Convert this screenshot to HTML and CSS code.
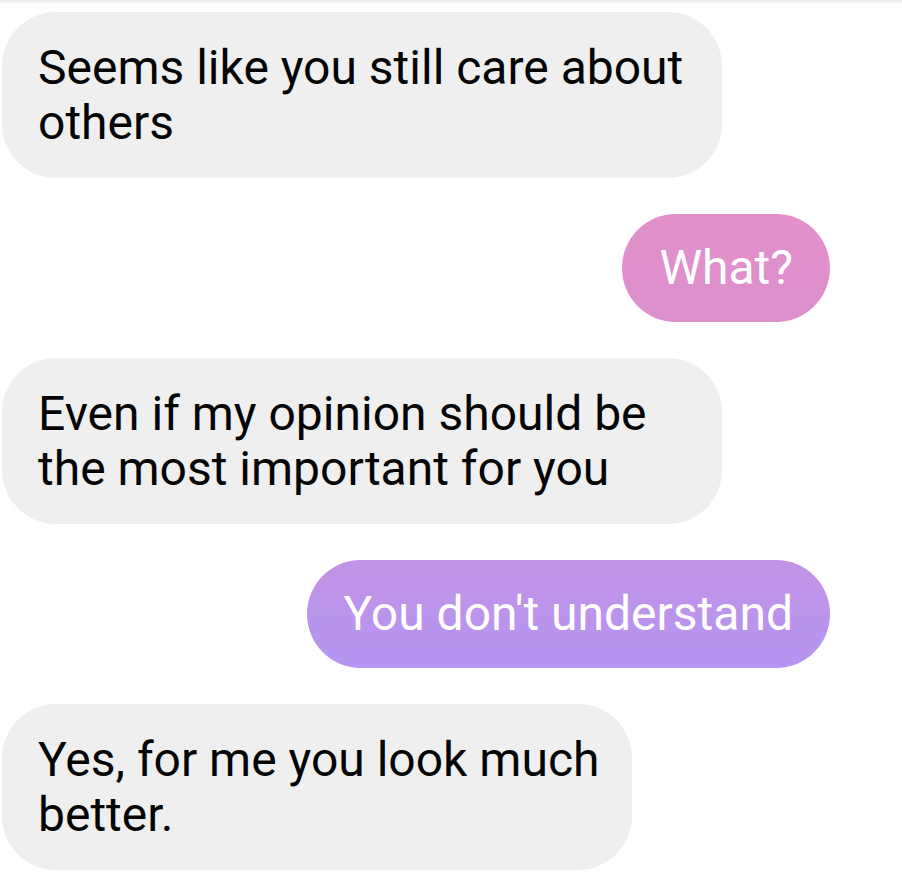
FILE: index.html
```
<!DOCTYPE html>
<html lang="en">
<head>
<meta charset="utf-8">
<title>Chat</title>
<link rel="stylesheet" href="styles.css">
</head>
<body>
<div class="topline"></div>
<main class="chat">
  <div class="bubble in wide">Seems like you still care about others</div>
  <div class="bubble out pink">What?</div>
  <div class="bubble in wide">Even if my opinion should be the most important for you</div>
  <div class="bubble out purple">You don't understand</div>
  <div class="bubble in">Yes, for me you look much<br>better.</div>
</main>
</body>
</html>
```
FILE: styles.css
```
html, body {
  margin: 0;
  padding: 0;
  background: #ffffff;
}

body {
  width: 902px;
  height: 893px;
  overflow: hidden;
  position: relative;
  font-family: Roboto, "Liberation Sans", sans-serif;
}

.topline {
  position: absolute;
  top: 0;
  left: 0;
  right: 0;
  height: 4px;
  background: linear-gradient(#e9e9e9, rgba(255, 255, 255, 0));
}

.chat {
  display: flex;
  flex-direction: column;
  gap: 36px;
  padding: 12px 72px 0 2px;
}

.bubble {
  box-sizing: border-box;
  width: fit-content;
  font-size: 48px;
  line-height: 55px;
  padding: 28px 33px 28px 36px;
  border-radius: 54px;
}

.in {
  align-self: flex-start;
  background: #efefef;
  color: #050505;
}

.in.wide {
  width: 720px;
}

.out {
  align-self: flex-end;
  color: #ffffff;
  padding: 26px 37px 27px 37px;
}

.pink {
  background: linear-gradient(#e38fca, #dc90cd);
}

.purple {
  background: linear-gradient(#c293e6, #b495f1);
}
```
